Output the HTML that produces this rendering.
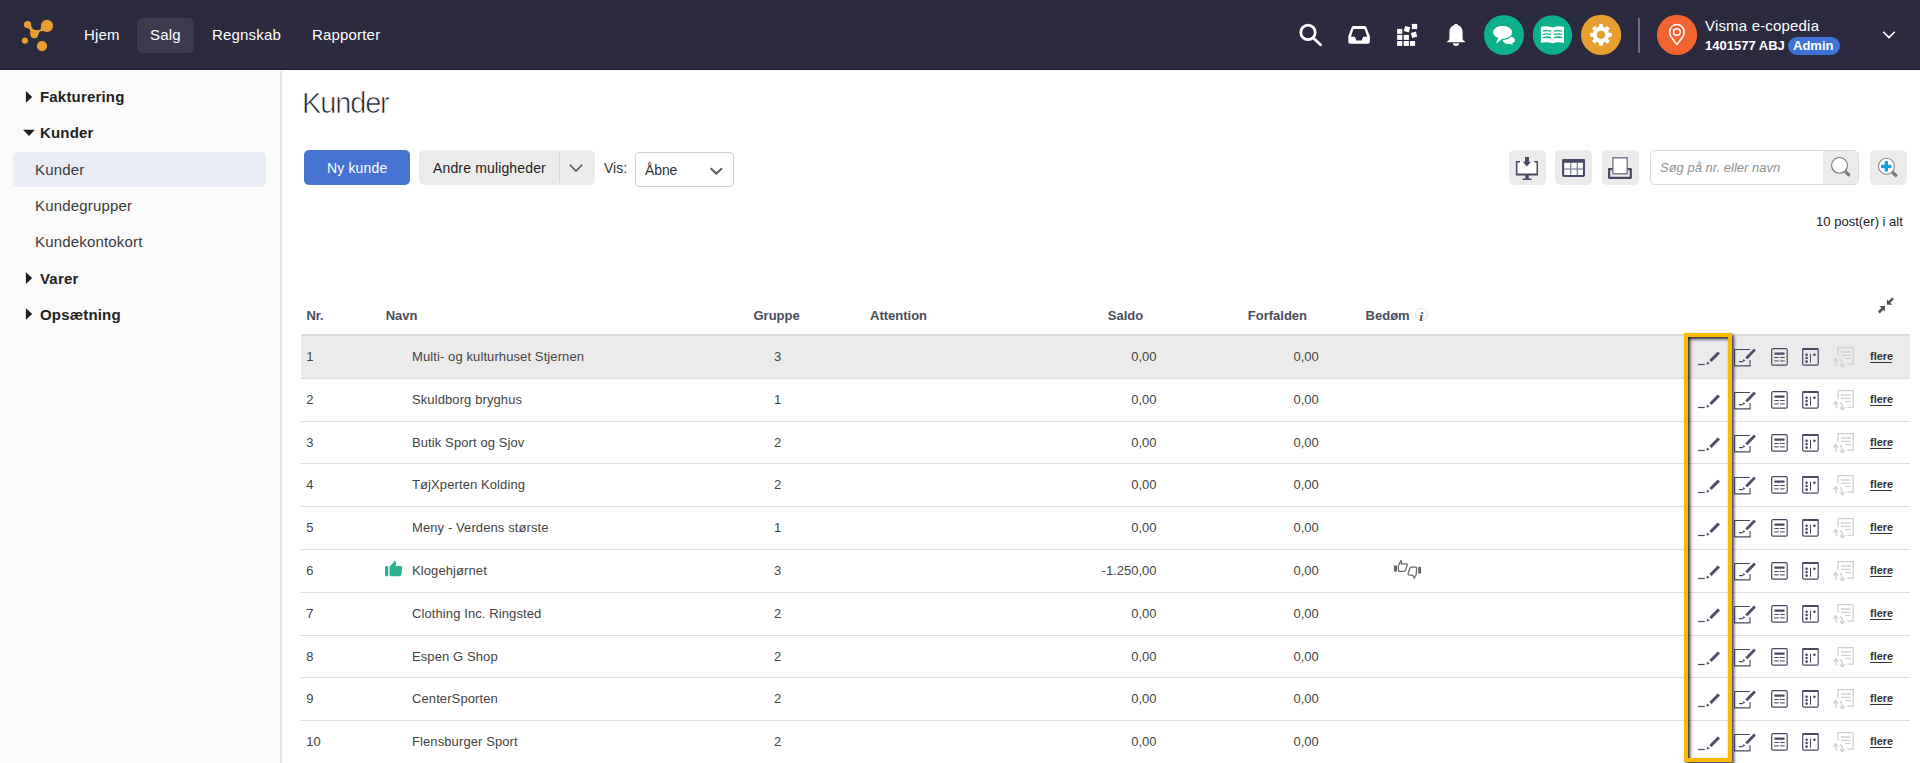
<!DOCTYPE html>
<html><head><meta charset="utf-8">
<style>
*{box-sizing:border-box;margin:0;padding:0}
html,body{width:1920px;height:763px;overflow:hidden;background:#fff;font-family:"Liberation Sans",sans-serif;position:relative}
.abs{position:absolute}
.t{position:absolute;white-space:nowrap;line-height:1}
svg{position:absolute;overflow:visible}
</style></head><body>
<div class="abs" style="left:0;top:0;width:1920px;height:70px;background:#2b2a3f;border-bottom:1px solid #1c1b2d"></div>
<svg style="left:0;top:0" width="70" height="70" viewBox="0 0 70 70"><g fill="#e89e2e">
<circle cx="27.55" cy="24.5" r="3.6"/><circle cx="47" cy="25.9" r="6.05"/><circle cx="34.3" cy="34.3" r="3.9"/>
<circle cx="24.96" cy="40.6" r="3.1"/><circle cx="42" cy="46.06" r="5.1"/>
<path d="M31.09 24.97 C31.5 27 32.5 29.2 34.16 29.69 C36 30.3 38.5 30.3 39.8 29.69 C40.8 29 41 27.5 41.3 26.4 L44.54 31.34 C43.5 31 42.5 31 42.18 31.1 C40.5 31.4 39.8 31.9 39.35 32.05 C38.5 33.5 38.5 35 37.93 35.8 C37 37.5 35.5 38.18 34.16 38.18 C32.5 38.18 31 37 30.6 34.87 C30.3 33 30.3 31 30.15 30.16 C29.5 29.2 29 28.8 28.5 28.5 C27 28 25.5 27.5 24.7 26.85 Z"/>
</g></svg>
<div class="abs" style="left:137px;top:18px;width:57px;height:35px;background:#3b3a4f;border-radius:5px"></div>
<div class="t" style="left:84px;top:27.30px;font-size:15px;color:#fff;letter-spacing:0.18px;">Hjem</div>
<div class="t" style="left:150px;top:27.30px;font-size:15px;color:#fff;letter-spacing:0.18px;">Salg</div>
<div class="t" style="left:212px;top:27.30px;font-size:15px;color:#fff;letter-spacing:0.18px;">Regnskab</div>
<div class="t" style="left:312px;top:27.30px;font-size:15px;color:#fff;letter-spacing:0.18px;">Rapporter</div>
<svg style="left:0;top:0" width="1920" height="70" viewBox="0 0 1920 70">
<g fill="none" stroke="#fff" stroke-width="2.8" stroke-linecap="round">
<circle cx="1308" cy="32.4" r="7.2"/><line x1="1313.8" y1="38.4" x2="1320.6" y2="44.8"/>
</g>
<path fill="#fff" fill-rule="evenodd" d="M1353.6 25.9 L1364.4 25.9 Q1365.8 25.9 1366.3 27.2 L1369.9 36.3 L1369.9 41.8 Q1369.9 43.8 1367.9 43.8 L1350.3 43.8 Q1348.3 43.8 1348.3 41.8 L1348.3 36.3 L1351.7 27.2 Q1352.2 25.9 1353.6 25.9 Z M1353.5 29 L1364.5 29 L1367.2 36.8 L1363.1 36.8 L1361.7 40.6 L1356.4 40.6 L1354.9 36.8 L1351 36.8 Z"/>
<g fill="#fff">
<rect x="1397.1" y="41" width="5.2" height="4.9"/><rect x="1403.7" y="41" width="5.2" height="4.9"/><rect x="1409.9" y="41" width="5.2" height="4.9"/>
<rect x="1397.1" y="34.9" width="5.2" height="5"/><rect x="1403.7" y="34.9" width="5.2" height="5"/>
<rect x="1397.1" y="28.9" width="5.2" height="5"/>
<rect x="1404.4" y="26.6" width="5.2" height="5.2" transform="rotate(15 1407 29.2)"/>
<rect x="1411.4" y="32.2" width="5.2" height="5.2" transform="rotate(-15 1414 34.8)"/>
<rect x="1411.8" y="23.9" width="5.4" height="5.2"/>
</g>
<path fill="#fff" d="M1456 23.7 C1457.2 23.7 1457.8 24.6 1458.2 25.3 C1461 26.2 1462.6 28.8 1462.6 32 L1462.6 38.5 C1462.6 39.8 1463.6 40.8 1464.9 41.2 L1464.9 42.3 L1447.2 42.3 L1447.2 41.2 C1448.5 40.8 1449.4 39.8 1449.4 38.5 L1449.4 32 C1449.4 28.8 1451 26.2 1453.8 25.3 C1454.2 24.6 1454.8 23.7 1456 23.7 Z M1452.9 43.2 L1459.2 43.2 C1459.2 44.9 1457.8 46 1456 46 C1454.3 46 1452.9 44.9 1452.9 43.2 Z"/>
<circle cx="1504" cy="35" r="20" fill="#0cb08b"/>
<circle cx="1552.5" cy="35" r="19.7" fill="#0cb08b"/>
<circle cx="1601.1" cy="34.9" r="20.1" fill="#e89f30"/>
<rect x="1638" y="18" width="2" height="34.8" fill="#6e6e80"/>
<circle cx="1677" cy="34.9" r="20.1" fill="#f26531"/>
</svg>
<svg style="left:0;top:0" width="1920" height="70" viewBox="0 0 1920 70">
<ellipse cx="1508.8" cy="40.1" rx="6.8" ry="4.5" fill="#fff" stroke="#0cb08b" stroke-width="1.2"/>
<path d="M1510.5 43.5 L1513 45.6 L1511.8 42.5Z" fill="#fff"/>
<ellipse cx="1502.6" cy="32.3" rx="10.1" ry="7.1" fill="#fff" stroke="#0cb08b" stroke-width="1.2"/>
<path d="M1498.5 37.2 L1495.8 43.8 L1503.2 38.3 Z" fill="#fff"/>
<path d="M1540.9 27 Q1546 25.5 1552.5 27.5 Q1559 25.5 1564 27 L1564 43 Q1558.5 41.5 1552.5 43.3 Q1546.5 41.5 1540.9 43 Z" fill="#fff"/>
<g stroke="#0cb08b" stroke-width="1.3" fill="none">
<path d="M1542.9 31.2 Q1547 30 1551.1 31.2"/><path d="M1542.9 34.4 Q1547 33.2 1551.1 34.4"/><path d="M1542.9 37.6 Q1547 36.4 1551.1 37.6"/>
<path d="M1554 31.2 Q1558 30 1561.9 31.2"/><path d="M1554 34.4 Q1558 33.2 1561.9 34.4"/><path d="M1554 37.6 Q1558 36.4 1561.9 37.6"/>
</g>
<g fill="#fff"><circle cx="1600.95" cy="34.85" r="8.3"/><rect x="1599.0" y="24.150000000000002" width="3.9" height="6" transform="rotate(0 1600.95 34.85)"/><rect x="1599.0" y="24.150000000000002" width="3.9" height="6" transform="rotate(45 1600.95 34.85)"/><rect x="1599.0" y="24.150000000000002" width="3.9" height="6" transform="rotate(90 1600.95 34.85)"/><rect x="1599.0" y="24.150000000000002" width="3.9" height="6" transform="rotate(135 1600.95 34.85)"/><rect x="1599.0" y="24.150000000000002" width="3.9" height="6" transform="rotate(180 1600.95 34.85)"/><rect x="1599.0" y="24.150000000000002" width="3.9" height="6" transform="rotate(225 1600.95 34.85)"/><rect x="1599.0" y="24.150000000000002" width="3.9" height="6" transform="rotate(270 1600.95 34.85)"/><rect x="1599.0" y="24.150000000000002" width="3.9" height="6" transform="rotate(315 1600.95 34.85)"/></g><circle cx="1600.95" cy="34.85" r="4.1" fill="#e89f30"/>
<path fill="none" stroke="#fff" stroke-width="1.5" stroke-linejoin="round" d="M1676.9 44.6 L1670.8 36.5 C1669.8 35 1669.6 33.6 1669.6 32 C1669.6 27.8 1672.9 24.6 1676.9 24.6 C1680.9 24.6 1684.2 27.8 1684.2 32 C1684.2 33.6 1684 35 1683 36.5 Z"/>
<circle cx="1676.9" cy="32" r="3.3" fill="none" stroke="#fff" stroke-width="1.5"/>
<path d="M1883.2 31.8 L1889 37.6 L1894.8 31.8" fill="none" stroke="#fff" stroke-width="1.6"/>
</svg>
<div class="t" style="left:1705px;top:18.30px;font-size:15px;color:#fff;letter-spacing:0.18px;">Visma e-copedia</div>
<div class="t" style="left:1705px;top:39.00px;font-size:13px;color:#fff;font-weight:bold;">1401577 ABJ</div>
<div class="abs" style="left:1788px;top:37.2px;width:52px;height:17.8px;background:#3f73d8;border-radius:9px"></div>
<div class="t" style="left:1793px;top:39.00px;font-size:13px;color:#fff;font-weight:bold;">Admin</div>
<div class="abs" style="left:0;top:71px;width:282px;height:692px;background:#fafafa;border-right:2px solid #e4e4e4"></div>
<svg style="left:0;top:0" width="282" height="763" viewBox="0 0 282 763"><g fill="#1e1e1e"><path d="M25.9 91.1 L32.2 96.89999999999999 L25.9 102.69999999999999 Z"/><path d="M25.9 272.3 L32.2 278.1 L25.9 283.90000000000003 Z"/><path d="M25.9 308.2 L32.2 314.0 L25.9 319.8 Z"/><path d="M23.1 129.8 L34.9 129.8 L29 135.9 Z"/></g></svg>
<div class="abs" style="left:13px;top:152px;width:253px;height:34.7px;background:#e8ecf6;border-radius:5px"></div>
<div class="t" style="left:40px;top:89.00px;font-size:15px;color:#222;font-weight:bold;letter-spacing:0.18px;">Fakturering</div>
<div class="t" style="left:40px;top:125.00px;font-size:15px;color:#222;font-weight:bold;letter-spacing:0.18px;">Kunder</div>
<div class="t" style="left:35px;top:162.10px;font-size:15px;color:#3a3a3a;letter-spacing:0.18px;">Kunder</div>
<div class="t" style="left:35px;top:198.20px;font-size:15px;color:#3a3a3a;letter-spacing:0.18px;">Kundegrupper</div>
<div class="t" style="left:35px;top:234.10px;font-size:15px;color:#3a3a3a;letter-spacing:0.18px;">Kundekontokort</div>
<div class="t" style="left:40px;top:270.80px;font-size:15px;color:#222;font-weight:bold;letter-spacing:0.18px;">Varer</div>
<div class="t" style="left:40px;top:306.90px;font-size:15px;color:#222;font-weight:bold;letter-spacing:0.18px;">Opsætning</div>
<div class="t" style="left:302px;top:89.05px;font-size:29px;color:#1e1e2e;letter-spacing:-1.15px;-webkit-text-stroke:0.7px #fff;">Kunder</div>
<div class="abs" style="left:304px;top:150px;width:106px;height:35px;background:#4573d2;border-radius:5px"></div>
<div class="t" style="left:327px;top:161.15px;font-size:14px;color:#fff;letter-spacing:0.15px;">Ny kunde</div>
<div class="abs" style="left:419.4px;top:150.4px;width:175.3px;height:34.2px;background:#ececec;border-radius:5px"></div>
<div class="abs" style="left:559px;top:153px;width:1px;height:28.5px;background:#d8d8d8"></div>
<div class="t" style="left:433px;top:161.15px;font-size:14px;color:#222;letter-spacing:0.15px;">Andre muligheder</div>
<div class="t" style="left:604px;top:161.15px;font-size:14px;color:#333;letter-spacing:0;">Vis:</div>
<div class="abs" style="left:635px;top:152px;width:99px;height:35px;background:#fff;border:1px solid #cfcfcf;border-radius:4px"></div>
<div class="t" style="left:645px;top:163.15px;font-size:14px;color:#333;letter-spacing:-0.1px;">Åbne</div>
<svg style="left:0;top:0" width="1920" height="300" viewBox="0 0 1920 300">
<path d="M569.8 164.8 L576 171 L582.2 164.8" fill="none" stroke="#444" stroke-width="1.3"/>
<path d="M710.6 168.2 L716.3 173.6 L722 168.2" fill="none" stroke="#5a5a5a" stroke-width="2"/>
</svg>
<div class="abs" style="left:1509px;top:150px;width:37px;height:35px;background:#ebebeb;border-radius:5px"></div>
<div class="abs" style="left:1555.2px;top:150px;width:36.8px;height:35px;background:#ebebeb;border-radius:5px"></div>
<div class="abs" style="left:1602px;top:150px;width:37px;height:35px;background:#ebebeb;border-radius:5px"></div>
<div class="abs" style="left:1870px;top:150px;width:37px;height:35px;background:#ebebeb;border-radius:5px"></div>
<div class="abs" style="left:1650.4px;top:150px;width:208.6px;height:35px;background:#fff;border:1px solid #dadada;border-radius:5px;overflow:hidden"><div class="abs" style="left:172px;top:-1px;width:37px;height:35px;background:#ebebeb"></div></div>
<div class="t" style="left:1660px;top:161.00px;font-size:13px;color:#939393;font-style:italic;">Søg på nr. eller navn</div>
<svg style="left:0;top:0" width="1920" height="300" viewBox="0 0 1920 300">
<path fill="#fff" d="M1516.6 161.7 L1537.3 161.7 L1537.3 174.6 L1516.6 174.6 Z"/>
<g fill="#474b63">
<path fill-rule="evenodd" d="M1515.9 161 L1520 161 L1520 162.5 L1517.4 162.5 L1517.4 173.6 L1536.5 173.6 L1536.5 162.5 L1534.2 162.5 L1534.2 161 L1538 161 L1538 175.6 L1515.9 175.6 Z"/>
<rect x="1525" y="157" width="4" height="5"/>
<path d="M1522.8 161.8 L1531 161.8 L1526.9 166.6 Z"/>
<rect x="1525.3" y="175" width="3.4" height="3.8"/>
<rect x="1522.5" y="178.4" width="9.1" height="1.6" rx="0.7"/>
</g>
<g>
<rect x="1563" y="161" width="21" height="15" fill="#fff"/>
<path fill="#474b63" fill-rule="evenodd" d="M1562.1 160 Q1562.1 159 1563.1 159 L1584 159 Q1585 159 1585 160 L1585 175 Q1585 176.9 1583 176.9 L1564.1 176.9 Q1562.1 176.9 1562.1 175 Z M1564.2 162.8 L1582.9 162.8 L1582.9 174.9 L1564.2 174.9 Z"/>
<rect x="1570.2" y="162.8" width="1.1" height="12.1" fill="#6d7085"/>
<rect x="1576.7" y="162.8" width="1.1" height="12.1" fill="#6d7085"/>
<rect x="1564.2" y="168.4" width="18.7" height="1.2" fill="#7d8095"/>
</g>
<path fill="none" stroke="#474b63" stroke-width="2.2" stroke-linejoin="round" d="M1613 169.1 L1609.1 169.1 L1609.1 177.8 L1630.8 177.8 L1630.8 169.1 L1627 169.1"/>
<path fill="#fff" stroke="#7a7d90" stroke-width="1.4" d="M1612.9 157.7 L1627.2 157.7 L1627.2 173.8 L1612.9 173.8 Z"/>
<circle cx="1839.5" cy="165.4" r="7.9" fill="#fff" stroke="#777" stroke-width="1.1"/>
<line x1="1845.3" y1="171.6" x2="1849.6" y2="175.6" stroke="#777" stroke-width="3.2"/>
<circle cx="1886.5" cy="166.3" r="8" fill="#fff" stroke="#888" stroke-width="1.1"/>
<line x1="1892.2" y1="172" x2="1896.8" y2="176.3" stroke="#777" stroke-width="3.2"/>
<rect x="1881.1" y="164.8" width="10.2" height="3.3" fill="#0d9ee2"/>
<rect x="1884.7" y="161.2" width="3.3" height="10.2" fill="#0d9ee2"/>
</svg>
<div class="t" style="right:17.200000000000045px;top:214.90px;font-size:13px;color:#222;text-align:right;">10 post(er) i alt</div>
<div class="t" style="left:306.4px;top:308.60px;font-size:13px;color:#4a4d5c;font-weight:bold;">Nr.</div>
<div class="t" style="left:385.7px;top:308.60px;font-size:13px;color:#4a4d5c;font-weight:bold;">Navn</div>
<div class="t" style="left:753.5px;top:308.60px;font-size:13px;color:#4a4d5c;font-weight:bold;">Gruppe</div>
<div class="t" style="left:870px;top:308.60px;font-size:13px;color:#4a4d5c;font-weight:bold;">Attention</div>
<div class="t" style="left:1107.8px;top:308.60px;font-size:13px;color:#4a4d5c;font-weight:bold;">Saldo</div>
<div class="t" style="left:1247.8px;top:308.60px;font-size:13px;color:#4a4d5c;font-weight:bold;">Forfalden</div>
<div class="t" style="left:1365.6px;top:308.60px;font-size:13px;color:#4a4d5c;font-weight:bold;">Bedøm</div>
<svg style="left:0;top:0" width="1920" height="763" viewBox="0 0 1920 763">
<circle cx="1421.5" cy="314.4" r="6" fill="#fff" stroke="#e0e0e0" stroke-width="1"/>
<text x="1419.6" y="320.5" font-family="Liberation Serif" font-style="italic" font-weight="bold" font-size="12.5" fill="#3d4252">i</text>
<g fill="#555">
<path d="M1886.9 304.7 L1886.9 299.2 L1888.6 300.9 L1892.1 297.4 L1893.9 299.2 L1890.4 302.7 L1892.1 304.7 Z"/>
<path d="M1884.9 306.1 L1884.9 311.6 L1883.2 309.9 L1879.7 313.4 L1877.9 311.6 L1881.4 308.1 L1879.4 306.1 Z"/>
</g>
</svg>
<div class="abs" style="left:301px;top:334px;width:1609px;height:2px;background:#dcdcdc"></div>
<div class="abs" style="left:301px;top:336px;width:1609px;height:42px;background:#ebebeb"></div>
<div class="abs" style="left:301px;top:378px;width:1609px;height:1px;background:#dddddd"></div>
<div class="abs" style="left:301px;top:421px;width:1609px;height:1px;background:#dddddd"></div>
<div class="abs" style="left:301px;top:463px;width:1609px;height:1px;background:#dddddd"></div>
<div class="abs" style="left:301px;top:506px;width:1609px;height:1px;background:#dddddd"></div>
<div class="abs" style="left:301px;top:549px;width:1609px;height:1px;background:#dddddd"></div>
<div class="abs" style="left:301px;top:592px;width:1609px;height:1px;background:#dddddd"></div>
<div class="abs" style="left:301px;top:635px;width:1609px;height:1px;background:#dddddd"></div>
<div class="abs" style="left:301px;top:677px;width:1609px;height:1px;background:#dddddd"></div>
<div class="abs" style="left:301px;top:720px;width:1609px;height:1px;background:#dddddd"></div>
<div class="t" style="left:306.2px;top:350.00px;font-size:13px;color:#444;">1</div>
<div class="t" style="left:412px;top:350.00px;font-size:13px;color:#444;letter-spacing:0.1px;">Multi- og kulturhuset Stjernen</div>
<div class="t" style="left:757.5px;width:40px;top:350.00px;font-size:13px;color:#444;text-align:center;">3</div>
<div class="t" style="right:763.5px;top:350.00px;font-size:13px;color:#444;text-align:right;">0,00</div>
<div class="t" style="right:601.2px;top:350.00px;font-size:13px;color:#444;text-align:right;">0,00</div>
<div class="t" style="left:1870px;top:351.39px;font-size:11px;color:#333;font-weight:bold;">flere</div>
<div class="abs" style="left:1870px;top:361.90px;width:22.3px;height:1px;background:#333"></div>
<div class="t" style="left:306.2px;top:393.00px;font-size:13px;color:#444;">2</div>
<div class="t" style="left:412px;top:393.00px;font-size:13px;color:#444;letter-spacing:0.1px;">Skuldborg bryghus</div>
<div class="t" style="left:757.5px;width:40px;top:393.00px;font-size:13px;color:#444;text-align:center;">1</div>
<div class="t" style="right:763.5px;top:393.00px;font-size:13px;color:#444;text-align:right;">0,00</div>
<div class="t" style="right:601.2px;top:393.00px;font-size:13px;color:#444;text-align:right;">0,00</div>
<div class="t" style="left:1870px;top:394.39px;font-size:11px;color:#333;font-weight:bold;">flere</div>
<div class="abs" style="left:1870px;top:404.90px;width:22.3px;height:1px;background:#333"></div>
<div class="t" style="left:306.2px;top:436.00px;font-size:13px;color:#444;">3</div>
<div class="t" style="left:412px;top:436.00px;font-size:13px;color:#444;letter-spacing:0.1px;">Butik Sport og Sjov</div>
<div class="t" style="left:757.5px;width:40px;top:436.00px;font-size:13px;color:#444;text-align:center;">2</div>
<div class="t" style="right:763.5px;top:436.00px;font-size:13px;color:#444;text-align:right;">0,00</div>
<div class="t" style="right:601.2px;top:436.00px;font-size:13px;color:#444;text-align:right;">0,00</div>
<div class="t" style="left:1870px;top:437.39px;font-size:11px;color:#333;font-weight:bold;">flere</div>
<div class="abs" style="left:1870px;top:447.90px;width:22.3px;height:1px;background:#333"></div>
<div class="t" style="left:306.2px;top:478.00px;font-size:13px;color:#444;">4</div>
<div class="t" style="left:412px;top:478.00px;font-size:13px;color:#444;letter-spacing:0.1px;">TøjXperten Kolding</div>
<div class="t" style="left:757.5px;width:40px;top:478.00px;font-size:13px;color:#444;text-align:center;">2</div>
<div class="t" style="right:763.5px;top:478.00px;font-size:13px;color:#444;text-align:right;">0,00</div>
<div class="t" style="right:601.2px;top:478.00px;font-size:13px;color:#444;text-align:right;">0,00</div>
<div class="t" style="left:1870px;top:479.39px;font-size:11px;color:#333;font-weight:bold;">flere</div>
<div class="abs" style="left:1870px;top:489.90px;width:22.3px;height:1px;background:#333"></div>
<div class="t" style="left:306.2px;top:521.00px;font-size:13px;color:#444;">5</div>
<div class="t" style="left:412px;top:521.00px;font-size:13px;color:#444;letter-spacing:0.1px;">Meny - Verdens største</div>
<div class="t" style="left:757.5px;width:40px;top:521.00px;font-size:13px;color:#444;text-align:center;">1</div>
<div class="t" style="right:763.5px;top:521.00px;font-size:13px;color:#444;text-align:right;">0,00</div>
<div class="t" style="right:601.2px;top:521.00px;font-size:13px;color:#444;text-align:right;">0,00</div>
<div class="t" style="left:1870px;top:522.39px;font-size:11px;color:#333;font-weight:bold;">flere</div>
<div class="abs" style="left:1870px;top:532.90px;width:22.3px;height:1px;background:#333"></div>
<div class="t" style="left:306.2px;top:564.00px;font-size:13px;color:#444;">6</div>
<div class="t" style="left:412px;top:564.00px;font-size:13px;color:#444;letter-spacing:0.1px;">Klogehjørnet</div>
<div class="t" style="left:757.5px;width:40px;top:564.00px;font-size:13px;color:#444;text-align:center;">3</div>
<div class="t" style="right:763.5px;top:564.00px;font-size:13px;color:#444;text-align:right;">-1.250,00</div>
<div class="t" style="right:601.2px;top:564.00px;font-size:13px;color:#444;text-align:right;">0,00</div>
<div class="t" style="left:1870px;top:565.39px;font-size:11px;color:#333;font-weight:bold;">flere</div>
<div class="abs" style="left:1870px;top:575.90px;width:22.3px;height:1px;background:#333"></div>
<div class="t" style="left:306.2px;top:607.00px;font-size:13px;color:#444;">7</div>
<div class="t" style="left:412px;top:607.00px;font-size:13px;color:#444;letter-spacing:0.1px;">Clothing Inc. Ringsted</div>
<div class="t" style="left:757.5px;width:40px;top:607.00px;font-size:13px;color:#444;text-align:center;">2</div>
<div class="t" style="right:763.5px;top:607.00px;font-size:13px;color:#444;text-align:right;">0,00</div>
<div class="t" style="right:601.2px;top:607.00px;font-size:13px;color:#444;text-align:right;">0,00</div>
<div class="t" style="left:1870px;top:608.39px;font-size:11px;color:#333;font-weight:bold;">flere</div>
<div class="abs" style="left:1870px;top:618.90px;width:22.3px;height:1px;background:#333"></div>
<div class="t" style="left:306.2px;top:650.00px;font-size:13px;color:#444;">8</div>
<div class="t" style="left:412px;top:650.00px;font-size:13px;color:#444;letter-spacing:0.1px;">Espen G Shop</div>
<div class="t" style="left:757.5px;width:40px;top:650.00px;font-size:13px;color:#444;text-align:center;">2</div>
<div class="t" style="right:763.5px;top:650.00px;font-size:13px;color:#444;text-align:right;">0,00</div>
<div class="t" style="right:601.2px;top:650.00px;font-size:13px;color:#444;text-align:right;">0,00</div>
<div class="t" style="left:1870px;top:651.39px;font-size:11px;color:#333;font-weight:bold;">flere</div>
<div class="abs" style="left:1870px;top:661.90px;width:22.3px;height:1px;background:#333"></div>
<div class="t" style="left:306.2px;top:692.00px;font-size:13px;color:#444;">9</div>
<div class="t" style="left:412px;top:692.00px;font-size:13px;color:#444;letter-spacing:0.1px;">CenterSporten</div>
<div class="t" style="left:757.5px;width:40px;top:692.00px;font-size:13px;color:#444;text-align:center;">2</div>
<div class="t" style="right:763.5px;top:692.00px;font-size:13px;color:#444;text-align:right;">0,00</div>
<div class="t" style="right:601.2px;top:692.00px;font-size:13px;color:#444;text-align:right;">0,00</div>
<div class="t" style="left:1870px;top:693.39px;font-size:11px;color:#333;font-weight:bold;">flere</div>
<div class="abs" style="left:1870px;top:703.90px;width:22.3px;height:1px;background:#333"></div>
<div class="t" style="left:306.2px;top:735.00px;font-size:13px;color:#444;">10</div>
<div class="t" style="left:412px;top:735.00px;font-size:13px;color:#444;letter-spacing:0.1px;">Flensburger Sport</div>
<div class="t" style="left:757.5px;width:40px;top:735.00px;font-size:13px;color:#444;text-align:center;">2</div>
<div class="t" style="right:763.5px;top:735.00px;font-size:13px;color:#444;text-align:right;">0,00</div>
<div class="t" style="right:601.2px;top:735.00px;font-size:13px;color:#444;text-align:right;">0,00</div>
<div class="t" style="left:1870px;top:736.39px;font-size:11px;color:#333;font-weight:bold;">flere</div>
<div class="abs" style="left:1870px;top:746.90px;width:22.3px;height:1px;background:#333"></div>
<svg style="left:0;top:0" width="1920" height="763" viewBox="0 0 1920 763"><g transform="translate(0 0.00)"><rect x="1698" y="363.9" width="6.7" height="1.2" fill="#474a63"/><path d="M1706.7 364.8 L1707 361.6 L1709.8 363.5 Z" fill="#524f6c"/><path d="M1709.3 360.1 L1711.6 361.9 L1720 353.4 L1717.7 351.6 Z" fill="#524f6c"/><path d="M1750.1 349.5 L1734.6 349.5 L1734.6 365.9 L1750 365.9 L1750 360" fill="none" stroke="#474a63" stroke-width="1.1"/><path d="M1739.4 361.6 L1742.6 361.6" fill="none" stroke="#474a63" stroke-width="1.3" stroke-linecap="round"/><path d="M1742.2 362.1 L1745.3 360.5 L1743.5 358.9 Z" fill="#474a63"/><path d="M1745.2 357.5 L1747.4 359.2 L1755.9 350.5 L1753.9 348.6 Z" fill="#524f6c"/><rect x="1771.7" y="348.7" width="15.5" height="16.5" rx="1.2" fill="none" stroke="#474a63" stroke-width="1.2"/><rect x="1774.2" y="352.5" width="10.5" height="2.2" rx="1" fill="#474a63"/><rect x="1774.2" y="357" width="4.6" height="1" fill="#474a63"/><rect x="1780.1" y="357" width="4.6" height="1" fill="#474a63"/><rect x="1774.2" y="360" width="4.6" height="1.7" fill="#8d8f9f"/><rect x="1780.1" y="360" width="4.6" height="1.7" fill="#8d8f9f"/><rect x="1802.7" y="348.7" width="15.5" height="16.5" rx="1.2" fill="none" stroke="#474a63" stroke-width="1.2"/><rect x="1802.3" y="348.1" width="16.3" height="2" rx="0.8" fill="#474a63"/><circle cx="1806.6" cy="354.7" r="1.3" fill="#474a63"/><circle cx="1806.6" cy="358" r="1.3" fill="#474a63"/><circle cx="1806.6" cy="361.6" r="1.3" fill="#474a63"/><rect x="1810" y="353.5" width="1" height="9.2" rx="0.5" fill="#474a63"/><circle cx="1814.4" cy="354.7" r="1.3" fill="#474a63"/><path d="M1838 355.8 L1838 347.7 L1853.2 347.7 L1853.2 364.2 L1847.3 364.2" fill="none" stroke="#cfcfcf" stroke-width="1.2"/><g stroke="#cfcfcf" fill="none"><line x1="1841" y1="352" x2="1850.6" y2="352" stroke-width="1.4"/><line x1="1841" y1="355.4" x2="1850.6" y2="355.4" stroke-width="1.2"/><line x1="1845.3" y1="358.5" x2="1850.6" y2="358.5" stroke-width="1.2"/><path d="M1835.8 359 Q1835.6 363.5 1836.9 365.6" stroke-width="1.3"/><path d="M1833.5 361.5 L1835.8 358.6 L1838 361.5" stroke-width="1.3"/><path d="M1840 359.3 Q1842.4 360.5 1842.4 366" stroke-width="1.3"/><path d="M1840 364.3 L1842.4 366.9 L1844.8 364.3" stroke-width="1.3"/></g></g><g transform="translate(0 43.00)"><rect x="1698" y="363.9" width="6.7" height="1.2" fill="#474a63"/><path d="M1706.7 364.8 L1707 361.6 L1709.8 363.5 Z" fill="#524f6c"/><path d="M1709.3 360.1 L1711.6 361.9 L1720 353.4 L1717.7 351.6 Z" fill="#524f6c"/><path d="M1750.1 349.5 L1734.6 349.5 L1734.6 365.9 L1750 365.9 L1750 360" fill="none" stroke="#474a63" stroke-width="1.1"/><path d="M1739.4 361.6 L1742.6 361.6" fill="none" stroke="#474a63" stroke-width="1.3" stroke-linecap="round"/><path d="M1742.2 362.1 L1745.3 360.5 L1743.5 358.9 Z" fill="#474a63"/><path d="M1745.2 357.5 L1747.4 359.2 L1755.9 350.5 L1753.9 348.6 Z" fill="#524f6c"/><rect x="1771.7" y="348.7" width="15.5" height="16.5" rx="1.2" fill="none" stroke="#474a63" stroke-width="1.2"/><rect x="1774.2" y="352.5" width="10.5" height="2.2" rx="1" fill="#474a63"/><rect x="1774.2" y="357" width="4.6" height="1" fill="#474a63"/><rect x="1780.1" y="357" width="4.6" height="1" fill="#474a63"/><rect x="1774.2" y="360" width="4.6" height="1.7" fill="#8d8f9f"/><rect x="1780.1" y="360" width="4.6" height="1.7" fill="#8d8f9f"/><rect x="1802.7" y="348.7" width="15.5" height="16.5" rx="1.2" fill="none" stroke="#474a63" stroke-width="1.2"/><rect x="1802.3" y="348.1" width="16.3" height="2" rx="0.8" fill="#474a63"/><circle cx="1806.6" cy="354.7" r="1.3" fill="#474a63"/><circle cx="1806.6" cy="358" r="1.3" fill="#474a63"/><circle cx="1806.6" cy="361.6" r="1.3" fill="#474a63"/><rect x="1810" y="353.5" width="1" height="9.2" rx="0.5" fill="#474a63"/><circle cx="1814.4" cy="354.7" r="1.3" fill="#474a63"/><path d="M1838 355.8 L1838 347.7 L1853.2 347.7 L1853.2 364.2 L1847.3 364.2" fill="none" stroke="#cfcfcf" stroke-width="1.2"/><g stroke="#cfcfcf" fill="none"><line x1="1841" y1="352" x2="1850.6" y2="352" stroke-width="1.4"/><line x1="1841" y1="355.4" x2="1850.6" y2="355.4" stroke-width="1.2"/><line x1="1845.3" y1="358.5" x2="1850.6" y2="358.5" stroke-width="1.2"/><path d="M1835.8 359 Q1835.6 363.5 1836.9 365.6" stroke-width="1.3"/><path d="M1833.5 361.5 L1835.8 358.6 L1838 361.5" stroke-width="1.3"/><path d="M1840 359.3 Q1842.4 360.5 1842.4 366" stroke-width="1.3"/><path d="M1840 364.3 L1842.4 366.9 L1844.8 364.3" stroke-width="1.3"/></g></g><g transform="translate(0 86.00)"><rect x="1698" y="363.9" width="6.7" height="1.2" fill="#474a63"/><path d="M1706.7 364.8 L1707 361.6 L1709.8 363.5 Z" fill="#524f6c"/><path d="M1709.3 360.1 L1711.6 361.9 L1720 353.4 L1717.7 351.6 Z" fill="#524f6c"/><path d="M1750.1 349.5 L1734.6 349.5 L1734.6 365.9 L1750 365.9 L1750 360" fill="none" stroke="#474a63" stroke-width="1.1"/><path d="M1739.4 361.6 L1742.6 361.6" fill="none" stroke="#474a63" stroke-width="1.3" stroke-linecap="round"/><path d="M1742.2 362.1 L1745.3 360.5 L1743.5 358.9 Z" fill="#474a63"/><path d="M1745.2 357.5 L1747.4 359.2 L1755.9 350.5 L1753.9 348.6 Z" fill="#524f6c"/><rect x="1771.7" y="348.7" width="15.5" height="16.5" rx="1.2" fill="none" stroke="#474a63" stroke-width="1.2"/><rect x="1774.2" y="352.5" width="10.5" height="2.2" rx="1" fill="#474a63"/><rect x="1774.2" y="357" width="4.6" height="1" fill="#474a63"/><rect x="1780.1" y="357" width="4.6" height="1" fill="#474a63"/><rect x="1774.2" y="360" width="4.6" height="1.7" fill="#8d8f9f"/><rect x="1780.1" y="360" width="4.6" height="1.7" fill="#8d8f9f"/><rect x="1802.7" y="348.7" width="15.5" height="16.5" rx="1.2" fill="none" stroke="#474a63" stroke-width="1.2"/><rect x="1802.3" y="348.1" width="16.3" height="2" rx="0.8" fill="#474a63"/><circle cx="1806.6" cy="354.7" r="1.3" fill="#474a63"/><circle cx="1806.6" cy="358" r="1.3" fill="#474a63"/><circle cx="1806.6" cy="361.6" r="1.3" fill="#474a63"/><rect x="1810" y="353.5" width="1" height="9.2" rx="0.5" fill="#474a63"/><circle cx="1814.4" cy="354.7" r="1.3" fill="#474a63"/><path d="M1838 355.8 L1838 347.7 L1853.2 347.7 L1853.2 364.2 L1847.3 364.2" fill="none" stroke="#cfcfcf" stroke-width="1.2"/><g stroke="#cfcfcf" fill="none"><line x1="1841" y1="352" x2="1850.6" y2="352" stroke-width="1.4"/><line x1="1841" y1="355.4" x2="1850.6" y2="355.4" stroke-width="1.2"/><line x1="1845.3" y1="358.5" x2="1850.6" y2="358.5" stroke-width="1.2"/><path d="M1835.8 359 Q1835.6 363.5 1836.9 365.6" stroke-width="1.3"/><path d="M1833.5 361.5 L1835.8 358.6 L1838 361.5" stroke-width="1.3"/><path d="M1840 359.3 Q1842.4 360.5 1842.4 366" stroke-width="1.3"/><path d="M1840 364.3 L1842.4 366.9 L1844.8 364.3" stroke-width="1.3"/></g></g><g transform="translate(0 128.00)"><rect x="1698" y="363.9" width="6.7" height="1.2" fill="#474a63"/><path d="M1706.7 364.8 L1707 361.6 L1709.8 363.5 Z" fill="#524f6c"/><path d="M1709.3 360.1 L1711.6 361.9 L1720 353.4 L1717.7 351.6 Z" fill="#524f6c"/><path d="M1750.1 349.5 L1734.6 349.5 L1734.6 365.9 L1750 365.9 L1750 360" fill="none" stroke="#474a63" stroke-width="1.1"/><path d="M1739.4 361.6 L1742.6 361.6" fill="none" stroke="#474a63" stroke-width="1.3" stroke-linecap="round"/><path d="M1742.2 362.1 L1745.3 360.5 L1743.5 358.9 Z" fill="#474a63"/><path d="M1745.2 357.5 L1747.4 359.2 L1755.9 350.5 L1753.9 348.6 Z" fill="#524f6c"/><rect x="1771.7" y="348.7" width="15.5" height="16.5" rx="1.2" fill="none" stroke="#474a63" stroke-width="1.2"/><rect x="1774.2" y="352.5" width="10.5" height="2.2" rx="1" fill="#474a63"/><rect x="1774.2" y="357" width="4.6" height="1" fill="#474a63"/><rect x="1780.1" y="357" width="4.6" height="1" fill="#474a63"/><rect x="1774.2" y="360" width="4.6" height="1.7" fill="#8d8f9f"/><rect x="1780.1" y="360" width="4.6" height="1.7" fill="#8d8f9f"/><rect x="1802.7" y="348.7" width="15.5" height="16.5" rx="1.2" fill="none" stroke="#474a63" stroke-width="1.2"/><rect x="1802.3" y="348.1" width="16.3" height="2" rx="0.8" fill="#474a63"/><circle cx="1806.6" cy="354.7" r="1.3" fill="#474a63"/><circle cx="1806.6" cy="358" r="1.3" fill="#474a63"/><circle cx="1806.6" cy="361.6" r="1.3" fill="#474a63"/><rect x="1810" y="353.5" width="1" height="9.2" rx="0.5" fill="#474a63"/><circle cx="1814.4" cy="354.7" r="1.3" fill="#474a63"/><path d="M1838 355.8 L1838 347.7 L1853.2 347.7 L1853.2 364.2 L1847.3 364.2" fill="none" stroke="#cfcfcf" stroke-width="1.2"/><g stroke="#cfcfcf" fill="none"><line x1="1841" y1="352" x2="1850.6" y2="352" stroke-width="1.4"/><line x1="1841" y1="355.4" x2="1850.6" y2="355.4" stroke-width="1.2"/><line x1="1845.3" y1="358.5" x2="1850.6" y2="358.5" stroke-width="1.2"/><path d="M1835.8 359 Q1835.6 363.5 1836.9 365.6" stroke-width="1.3"/><path d="M1833.5 361.5 L1835.8 358.6 L1838 361.5" stroke-width="1.3"/><path d="M1840 359.3 Q1842.4 360.5 1842.4 366" stroke-width="1.3"/><path d="M1840 364.3 L1842.4 366.9 L1844.8 364.3" stroke-width="1.3"/></g></g><g transform="translate(0 171.00)"><rect x="1698" y="363.9" width="6.7" height="1.2" fill="#474a63"/><path d="M1706.7 364.8 L1707 361.6 L1709.8 363.5 Z" fill="#524f6c"/><path d="M1709.3 360.1 L1711.6 361.9 L1720 353.4 L1717.7 351.6 Z" fill="#524f6c"/><path d="M1750.1 349.5 L1734.6 349.5 L1734.6 365.9 L1750 365.9 L1750 360" fill="none" stroke="#474a63" stroke-width="1.1"/><path d="M1739.4 361.6 L1742.6 361.6" fill="none" stroke="#474a63" stroke-width="1.3" stroke-linecap="round"/><path d="M1742.2 362.1 L1745.3 360.5 L1743.5 358.9 Z" fill="#474a63"/><path d="M1745.2 357.5 L1747.4 359.2 L1755.9 350.5 L1753.9 348.6 Z" fill="#524f6c"/><rect x="1771.7" y="348.7" width="15.5" height="16.5" rx="1.2" fill="none" stroke="#474a63" stroke-width="1.2"/><rect x="1774.2" y="352.5" width="10.5" height="2.2" rx="1" fill="#474a63"/><rect x="1774.2" y="357" width="4.6" height="1" fill="#474a63"/><rect x="1780.1" y="357" width="4.6" height="1" fill="#474a63"/><rect x="1774.2" y="360" width="4.6" height="1.7" fill="#8d8f9f"/><rect x="1780.1" y="360" width="4.6" height="1.7" fill="#8d8f9f"/><rect x="1802.7" y="348.7" width="15.5" height="16.5" rx="1.2" fill="none" stroke="#474a63" stroke-width="1.2"/><rect x="1802.3" y="348.1" width="16.3" height="2" rx="0.8" fill="#474a63"/><circle cx="1806.6" cy="354.7" r="1.3" fill="#474a63"/><circle cx="1806.6" cy="358" r="1.3" fill="#474a63"/><circle cx="1806.6" cy="361.6" r="1.3" fill="#474a63"/><rect x="1810" y="353.5" width="1" height="9.2" rx="0.5" fill="#474a63"/><circle cx="1814.4" cy="354.7" r="1.3" fill="#474a63"/><path d="M1838 355.8 L1838 347.7 L1853.2 347.7 L1853.2 364.2 L1847.3 364.2" fill="none" stroke="#cfcfcf" stroke-width="1.2"/><g stroke="#cfcfcf" fill="none"><line x1="1841" y1="352" x2="1850.6" y2="352" stroke-width="1.4"/><line x1="1841" y1="355.4" x2="1850.6" y2="355.4" stroke-width="1.2"/><line x1="1845.3" y1="358.5" x2="1850.6" y2="358.5" stroke-width="1.2"/><path d="M1835.8 359 Q1835.6 363.5 1836.9 365.6" stroke-width="1.3"/><path d="M1833.5 361.5 L1835.8 358.6 L1838 361.5" stroke-width="1.3"/><path d="M1840 359.3 Q1842.4 360.5 1842.4 366" stroke-width="1.3"/><path d="M1840 364.3 L1842.4 366.9 L1844.8 364.3" stroke-width="1.3"/></g></g><g transform="translate(0 214.00)"><rect x="1698" y="363.9" width="6.7" height="1.2" fill="#474a63"/><path d="M1706.7 364.8 L1707 361.6 L1709.8 363.5 Z" fill="#524f6c"/><path d="M1709.3 360.1 L1711.6 361.9 L1720 353.4 L1717.7 351.6 Z" fill="#524f6c"/><path d="M1750.1 349.5 L1734.6 349.5 L1734.6 365.9 L1750 365.9 L1750 360" fill="none" stroke="#474a63" stroke-width="1.1"/><path d="M1739.4 361.6 L1742.6 361.6" fill="none" stroke="#474a63" stroke-width="1.3" stroke-linecap="round"/><path d="M1742.2 362.1 L1745.3 360.5 L1743.5 358.9 Z" fill="#474a63"/><path d="M1745.2 357.5 L1747.4 359.2 L1755.9 350.5 L1753.9 348.6 Z" fill="#524f6c"/><rect x="1771.7" y="348.7" width="15.5" height="16.5" rx="1.2" fill="none" stroke="#474a63" stroke-width="1.2"/><rect x="1774.2" y="352.5" width="10.5" height="2.2" rx="1" fill="#474a63"/><rect x="1774.2" y="357" width="4.6" height="1" fill="#474a63"/><rect x="1780.1" y="357" width="4.6" height="1" fill="#474a63"/><rect x="1774.2" y="360" width="4.6" height="1.7" fill="#8d8f9f"/><rect x="1780.1" y="360" width="4.6" height="1.7" fill="#8d8f9f"/><rect x="1802.7" y="348.7" width="15.5" height="16.5" rx="1.2" fill="none" stroke="#474a63" stroke-width="1.2"/><rect x="1802.3" y="348.1" width="16.3" height="2" rx="0.8" fill="#474a63"/><circle cx="1806.6" cy="354.7" r="1.3" fill="#474a63"/><circle cx="1806.6" cy="358" r="1.3" fill="#474a63"/><circle cx="1806.6" cy="361.6" r="1.3" fill="#474a63"/><rect x="1810" y="353.5" width="1" height="9.2" rx="0.5" fill="#474a63"/><circle cx="1814.4" cy="354.7" r="1.3" fill="#474a63"/><path d="M1838 355.8 L1838 347.7 L1853.2 347.7 L1853.2 364.2 L1847.3 364.2" fill="none" stroke="#cfcfcf" stroke-width="1.2"/><g stroke="#cfcfcf" fill="none"><line x1="1841" y1="352" x2="1850.6" y2="352" stroke-width="1.4"/><line x1="1841" y1="355.4" x2="1850.6" y2="355.4" stroke-width="1.2"/><line x1="1845.3" y1="358.5" x2="1850.6" y2="358.5" stroke-width="1.2"/><path d="M1835.8 359 Q1835.6 363.5 1836.9 365.6" stroke-width="1.3"/><path d="M1833.5 361.5 L1835.8 358.6 L1838 361.5" stroke-width="1.3"/><path d="M1840 359.3 Q1842.4 360.5 1842.4 366" stroke-width="1.3"/><path d="M1840 364.3 L1842.4 366.9 L1844.8 364.3" stroke-width="1.3"/></g></g><g transform="translate(0 257.00)"><rect x="1698" y="363.9" width="6.7" height="1.2" fill="#474a63"/><path d="M1706.7 364.8 L1707 361.6 L1709.8 363.5 Z" fill="#524f6c"/><path d="M1709.3 360.1 L1711.6 361.9 L1720 353.4 L1717.7 351.6 Z" fill="#524f6c"/><path d="M1750.1 349.5 L1734.6 349.5 L1734.6 365.9 L1750 365.9 L1750 360" fill="none" stroke="#474a63" stroke-width="1.1"/><path d="M1739.4 361.6 L1742.6 361.6" fill="none" stroke="#474a63" stroke-width="1.3" stroke-linecap="round"/><path d="M1742.2 362.1 L1745.3 360.5 L1743.5 358.9 Z" fill="#474a63"/><path d="M1745.2 357.5 L1747.4 359.2 L1755.9 350.5 L1753.9 348.6 Z" fill="#524f6c"/><rect x="1771.7" y="348.7" width="15.5" height="16.5" rx="1.2" fill="none" stroke="#474a63" stroke-width="1.2"/><rect x="1774.2" y="352.5" width="10.5" height="2.2" rx="1" fill="#474a63"/><rect x="1774.2" y="357" width="4.6" height="1" fill="#474a63"/><rect x="1780.1" y="357" width="4.6" height="1" fill="#474a63"/><rect x="1774.2" y="360" width="4.6" height="1.7" fill="#8d8f9f"/><rect x="1780.1" y="360" width="4.6" height="1.7" fill="#8d8f9f"/><rect x="1802.7" y="348.7" width="15.5" height="16.5" rx="1.2" fill="none" stroke="#474a63" stroke-width="1.2"/><rect x="1802.3" y="348.1" width="16.3" height="2" rx="0.8" fill="#474a63"/><circle cx="1806.6" cy="354.7" r="1.3" fill="#474a63"/><circle cx="1806.6" cy="358" r="1.3" fill="#474a63"/><circle cx="1806.6" cy="361.6" r="1.3" fill="#474a63"/><rect x="1810" y="353.5" width="1" height="9.2" rx="0.5" fill="#474a63"/><circle cx="1814.4" cy="354.7" r="1.3" fill="#474a63"/><path d="M1838 355.8 L1838 347.7 L1853.2 347.7 L1853.2 364.2 L1847.3 364.2" fill="none" stroke="#cfcfcf" stroke-width="1.2"/><g stroke="#cfcfcf" fill="none"><line x1="1841" y1="352" x2="1850.6" y2="352" stroke-width="1.4"/><line x1="1841" y1="355.4" x2="1850.6" y2="355.4" stroke-width="1.2"/><line x1="1845.3" y1="358.5" x2="1850.6" y2="358.5" stroke-width="1.2"/><path d="M1835.8 359 Q1835.6 363.5 1836.9 365.6" stroke-width="1.3"/><path d="M1833.5 361.5 L1835.8 358.6 L1838 361.5" stroke-width="1.3"/><path d="M1840 359.3 Q1842.4 360.5 1842.4 366" stroke-width="1.3"/><path d="M1840 364.3 L1842.4 366.9 L1844.8 364.3" stroke-width="1.3"/></g></g><g transform="translate(0 300.00)"><rect x="1698" y="363.9" width="6.7" height="1.2" fill="#474a63"/><path d="M1706.7 364.8 L1707 361.6 L1709.8 363.5 Z" fill="#524f6c"/><path d="M1709.3 360.1 L1711.6 361.9 L1720 353.4 L1717.7 351.6 Z" fill="#524f6c"/><path d="M1750.1 349.5 L1734.6 349.5 L1734.6 365.9 L1750 365.9 L1750 360" fill="none" stroke="#474a63" stroke-width="1.1"/><path d="M1739.4 361.6 L1742.6 361.6" fill="none" stroke="#474a63" stroke-width="1.3" stroke-linecap="round"/><path d="M1742.2 362.1 L1745.3 360.5 L1743.5 358.9 Z" fill="#474a63"/><path d="M1745.2 357.5 L1747.4 359.2 L1755.9 350.5 L1753.9 348.6 Z" fill="#524f6c"/><rect x="1771.7" y="348.7" width="15.5" height="16.5" rx="1.2" fill="none" stroke="#474a63" stroke-width="1.2"/><rect x="1774.2" y="352.5" width="10.5" height="2.2" rx="1" fill="#474a63"/><rect x="1774.2" y="357" width="4.6" height="1" fill="#474a63"/><rect x="1780.1" y="357" width="4.6" height="1" fill="#474a63"/><rect x="1774.2" y="360" width="4.6" height="1.7" fill="#8d8f9f"/><rect x="1780.1" y="360" width="4.6" height="1.7" fill="#8d8f9f"/><rect x="1802.7" y="348.7" width="15.5" height="16.5" rx="1.2" fill="none" stroke="#474a63" stroke-width="1.2"/><rect x="1802.3" y="348.1" width="16.3" height="2" rx="0.8" fill="#474a63"/><circle cx="1806.6" cy="354.7" r="1.3" fill="#474a63"/><circle cx="1806.6" cy="358" r="1.3" fill="#474a63"/><circle cx="1806.6" cy="361.6" r="1.3" fill="#474a63"/><rect x="1810" y="353.5" width="1" height="9.2" rx="0.5" fill="#474a63"/><circle cx="1814.4" cy="354.7" r="1.3" fill="#474a63"/><path d="M1838 355.8 L1838 347.7 L1853.2 347.7 L1853.2 364.2 L1847.3 364.2" fill="none" stroke="#cfcfcf" stroke-width="1.2"/><g stroke="#cfcfcf" fill="none"><line x1="1841" y1="352" x2="1850.6" y2="352" stroke-width="1.4"/><line x1="1841" y1="355.4" x2="1850.6" y2="355.4" stroke-width="1.2"/><line x1="1845.3" y1="358.5" x2="1850.6" y2="358.5" stroke-width="1.2"/><path d="M1835.8 359 Q1835.6 363.5 1836.9 365.6" stroke-width="1.3"/><path d="M1833.5 361.5 L1835.8 358.6 L1838 361.5" stroke-width="1.3"/><path d="M1840 359.3 Q1842.4 360.5 1842.4 366" stroke-width="1.3"/><path d="M1840 364.3 L1842.4 366.9 L1844.8 364.3" stroke-width="1.3"/></g></g><g transform="translate(0 342.00)"><rect x="1698" y="363.9" width="6.7" height="1.2" fill="#474a63"/><path d="M1706.7 364.8 L1707 361.6 L1709.8 363.5 Z" fill="#524f6c"/><path d="M1709.3 360.1 L1711.6 361.9 L1720 353.4 L1717.7 351.6 Z" fill="#524f6c"/><path d="M1750.1 349.5 L1734.6 349.5 L1734.6 365.9 L1750 365.9 L1750 360" fill="none" stroke="#474a63" stroke-width="1.1"/><path d="M1739.4 361.6 L1742.6 361.6" fill="none" stroke="#474a63" stroke-width="1.3" stroke-linecap="round"/><path d="M1742.2 362.1 L1745.3 360.5 L1743.5 358.9 Z" fill="#474a63"/><path d="M1745.2 357.5 L1747.4 359.2 L1755.9 350.5 L1753.9 348.6 Z" fill="#524f6c"/><rect x="1771.7" y="348.7" width="15.5" height="16.5" rx="1.2" fill="none" stroke="#474a63" stroke-width="1.2"/><rect x="1774.2" y="352.5" width="10.5" height="2.2" rx="1" fill="#474a63"/><rect x="1774.2" y="357" width="4.6" height="1" fill="#474a63"/><rect x="1780.1" y="357" width="4.6" height="1" fill="#474a63"/><rect x="1774.2" y="360" width="4.6" height="1.7" fill="#8d8f9f"/><rect x="1780.1" y="360" width="4.6" height="1.7" fill="#8d8f9f"/><rect x="1802.7" y="348.7" width="15.5" height="16.5" rx="1.2" fill="none" stroke="#474a63" stroke-width="1.2"/><rect x="1802.3" y="348.1" width="16.3" height="2" rx="0.8" fill="#474a63"/><circle cx="1806.6" cy="354.7" r="1.3" fill="#474a63"/><circle cx="1806.6" cy="358" r="1.3" fill="#474a63"/><circle cx="1806.6" cy="361.6" r="1.3" fill="#474a63"/><rect x="1810" y="353.5" width="1" height="9.2" rx="0.5" fill="#474a63"/><circle cx="1814.4" cy="354.7" r="1.3" fill="#474a63"/><path d="M1838 355.8 L1838 347.7 L1853.2 347.7 L1853.2 364.2 L1847.3 364.2" fill="none" stroke="#cfcfcf" stroke-width="1.2"/><g stroke="#cfcfcf" fill="none"><line x1="1841" y1="352" x2="1850.6" y2="352" stroke-width="1.4"/><line x1="1841" y1="355.4" x2="1850.6" y2="355.4" stroke-width="1.2"/><line x1="1845.3" y1="358.5" x2="1850.6" y2="358.5" stroke-width="1.2"/><path d="M1835.8 359 Q1835.6 363.5 1836.9 365.6" stroke-width="1.3"/><path d="M1833.5 361.5 L1835.8 358.6 L1838 361.5" stroke-width="1.3"/><path d="M1840 359.3 Q1842.4 360.5 1842.4 366" stroke-width="1.3"/><path d="M1840 364.3 L1842.4 366.9 L1844.8 364.3" stroke-width="1.3"/></g></g><g transform="translate(0 385.00)"><rect x="1698" y="363.9" width="6.7" height="1.2" fill="#474a63"/><path d="M1706.7 364.8 L1707 361.6 L1709.8 363.5 Z" fill="#524f6c"/><path d="M1709.3 360.1 L1711.6 361.9 L1720 353.4 L1717.7 351.6 Z" fill="#524f6c"/><path d="M1750.1 349.5 L1734.6 349.5 L1734.6 365.9 L1750 365.9 L1750 360" fill="none" stroke="#474a63" stroke-width="1.1"/><path d="M1739.4 361.6 L1742.6 361.6" fill="none" stroke="#474a63" stroke-width="1.3" stroke-linecap="round"/><path d="M1742.2 362.1 L1745.3 360.5 L1743.5 358.9 Z" fill="#474a63"/><path d="M1745.2 357.5 L1747.4 359.2 L1755.9 350.5 L1753.9 348.6 Z" fill="#524f6c"/><rect x="1771.7" y="348.7" width="15.5" height="16.5" rx="1.2" fill="none" stroke="#474a63" stroke-width="1.2"/><rect x="1774.2" y="352.5" width="10.5" height="2.2" rx="1" fill="#474a63"/><rect x="1774.2" y="357" width="4.6" height="1" fill="#474a63"/><rect x="1780.1" y="357" width="4.6" height="1" fill="#474a63"/><rect x="1774.2" y="360" width="4.6" height="1.7" fill="#8d8f9f"/><rect x="1780.1" y="360" width="4.6" height="1.7" fill="#8d8f9f"/><rect x="1802.7" y="348.7" width="15.5" height="16.5" rx="1.2" fill="none" stroke="#474a63" stroke-width="1.2"/><rect x="1802.3" y="348.1" width="16.3" height="2" rx="0.8" fill="#474a63"/><circle cx="1806.6" cy="354.7" r="1.3" fill="#474a63"/><circle cx="1806.6" cy="358" r="1.3" fill="#474a63"/><circle cx="1806.6" cy="361.6" r="1.3" fill="#474a63"/><rect x="1810" y="353.5" width="1" height="9.2" rx="0.5" fill="#474a63"/><circle cx="1814.4" cy="354.7" r="1.3" fill="#474a63"/><path d="M1838 355.8 L1838 347.7 L1853.2 347.7 L1853.2 364.2 L1847.3 364.2" fill="none" stroke="#cfcfcf" stroke-width="1.2"/><g stroke="#cfcfcf" fill="none"><line x1="1841" y1="352" x2="1850.6" y2="352" stroke-width="1.4"/><line x1="1841" y1="355.4" x2="1850.6" y2="355.4" stroke-width="1.2"/><line x1="1845.3" y1="358.5" x2="1850.6" y2="358.5" stroke-width="1.2"/><path d="M1835.8 359 Q1835.6 363.5 1836.9 365.6" stroke-width="1.3"/><path d="M1833.5 361.5 L1835.8 358.6 L1838 361.5" stroke-width="1.3"/><path d="M1840 359.3 Q1842.4 360.5 1842.4 366" stroke-width="1.3"/><path d="M1840 364.3 L1842.4 366.9 L1844.8 364.3" stroke-width="1.3"/></g></g></svg>
<svg style="left:0;top:0" width="1920" height="763" viewBox="0 0 1920 763">
<rect x="385" y="566" width="3.3" height="10.3" rx="1.3" fill="#2cb28f"/>
<path d="M389.5 566.5 L392.5 563.5 Q393.5 561 394.8 561 Q396.5 561.2 396 564.5 L395.4 566 L400.6 566 Q402.4 566.2 402.2 568 L401.4 574.5 Q401 576.3 399.3 576.3 L391 576.3 Q389.5 576.3 389.5 574.8 Z" fill="#2cb28f"/>
<g fill="none" stroke="#666" stroke-width="1.25" stroke-linejoin="round">
<path d="M1398.6 571 L1398.2 566 L1399.4 563.7 L1400.9 560.6 L1401.6 561.6 L1401.3 563.8 L1406.3 563.8 Q1407.3 564 1407.1 565 L1405.6 570.2 Q1405.1 571.3 1404 571.3 L1399.5 571.3 Z"/>
<path d="M1409.8 568.3 Q1410.2 567.2 1411 567.2 L1416 567.2 Q1416.7 567.4 1416.6 568.4 L1416.2 574.5 L1414.2 578.3 L1412.8 575.3 L1408.6 574.8 Q1408 574.5 1408.1 573.6 Z"/>
</g>
<rect x="1393.9" y="565.2" width="3.1" height="6.6" rx="1.2" fill="#666"/>
<rect x="1418.1" y="566.7" width="3" height="7.1" rx="1.2" fill="#666"/>
</svg>
<div class="abs" style="left:1684px;top:333px;width:48px;height:429px;border:4px solid #fbb900;box-shadow:2px 2px 3px rgba(25,25,45,.85), inset 2px 2px 3.5px rgba(20,20,35,.95)"></div>
</body></html>
